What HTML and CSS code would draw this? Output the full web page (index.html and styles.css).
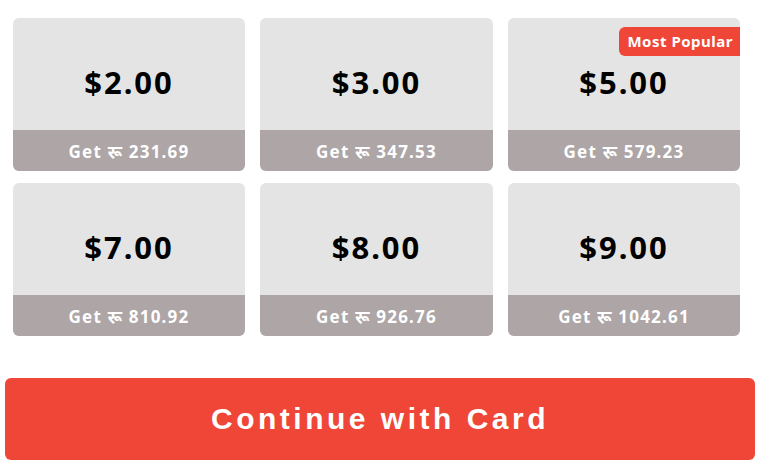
FILE: index.html
```html
<!DOCTYPE html>
<html lang="en">
<head>
    <meta charset="UTF-8">
    <link rel="stylesheet" href="styles.css">
    <title>Top up</title>
</head>
<body>
    <div class="packs">
        <div class="pack">
            <div class="price">$2.00</div>
            <div class="get">Get रू 231.69</div>
        </div>
        <div class="pack">
            <div class="price">$3.00</div>
            <div class="get">Get रू 347.53</div>
        </div>
        <div class="pack">
            <span class="badge">Most Popular</span>
            <div class="price">$5.00</div>
            <div class="get">Get रू 579.23</div>
        </div>
        <div class="pack">
            <div class="price">$7.00</div>
            <div class="get">Get रू 810.92</div>
        </div>
        <div class="pack">
            <div class="price">$8.00</div>
            <div class="get">Get रू 926.76</div>
        </div>
        <div class="pack">
            <div class="price">$9.00</div>
            <div class="get">Get रू 1042.61</div>
        </div>
    </div>
    <button class="continue">Continue with Card</button>
</body>
</html>
```

FILE: styles.css
```css
body{
    margin: 0;
    background: #fff;
    font-family: "Noto Sans", "Open Sans", sans-serif;
}
.packs{
    display: grid;
    grid-template-columns: 232px 233px 232px;
    column-gap: 15px;
    row-gap: 12px;
    padding: 18px 0 0 13px;
}
.pack{
    position: relative;
    height: 153px;
    background: #e4e4e4;
    border-radius: 6px;
    overflow: hidden;
    display: flex;
    flex-direction: column;
}
.price{
    flex: 1;
    display: flex;
    align-items: center;
    justify-content: center;
    padding-top: 16px;
    font-size: 31px;
    font-weight: 700;
    letter-spacing: 2px;
    color: #000;
}
.get{
    height: 41px;
    background: #ada5a6;
    color: #fff;
    font-size: 17px;
    font-weight: 700;
    letter-spacing: 1.2px;
    display: flex;
    align-items: center;
    justify-content: center;
    padding-top: 2px;
    box-sizing: border-box;
}
.badge{
    position: absolute;
    top: 9px;
    right: 0;
    background: #ef4637;
    color: #fff;
    font-size: 15px;
    font-weight: 700;
    letter-spacing: 0.5px;
    padding: 4px 7px 5px 8px;
    border-radius: 6px 0 0 6px;
}
.continue{
    display: block;
    margin: 42px 0 0 5px;
    width: 750px;
    height: 82px;
    border: 0;
    border-radius: 6px;
    background: #ef4637;
    color: #fff;
    font-family: "Liberation Sans", Arial, sans-serif;
    font-size: 30px;
    font-weight: 700;
    letter-spacing: 3.5px;
}
```
